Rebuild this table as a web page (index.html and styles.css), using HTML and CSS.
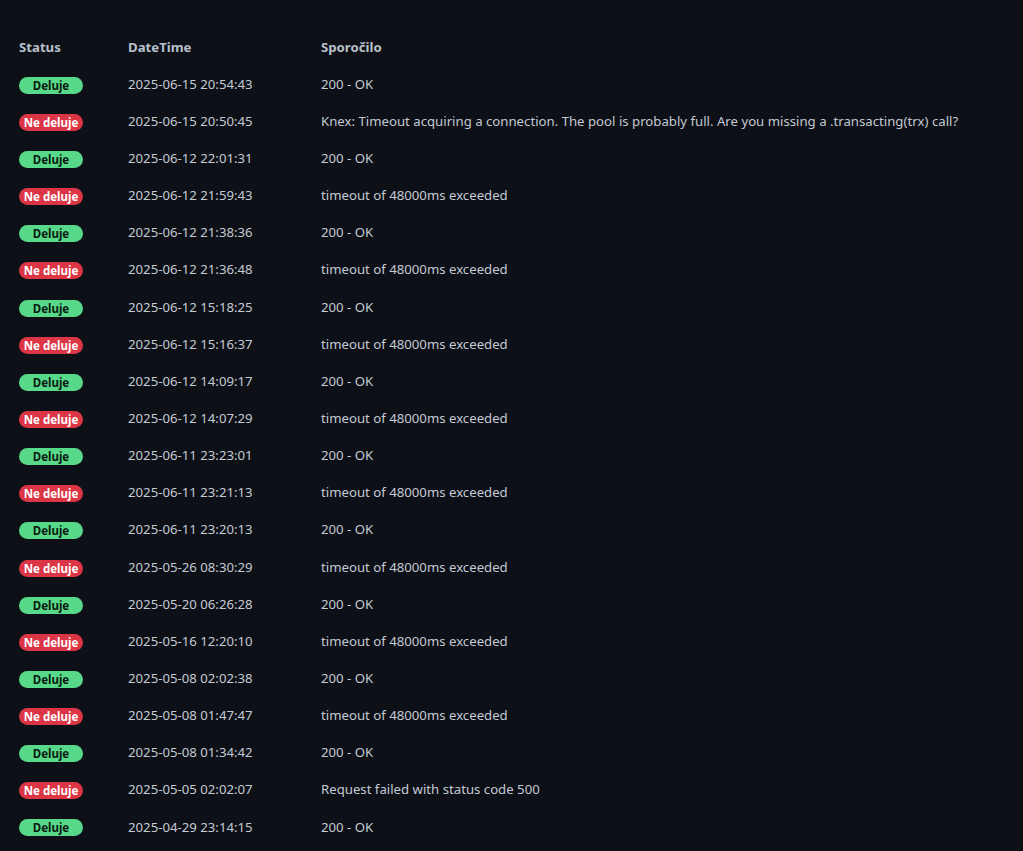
FILE: index.html
```html
<!DOCTYPE html>
<html lang="sl">
<head>
<meta charset="utf-8">
<title>Status</title>
<link rel="stylesheet" href="styles.css">
</head>
<body>
<main class="page">
<table class="log">
<thead>
<tr><th class="c-status">Status</th><th class="c-time">DateTime</th><th class="c-msg">Sporočilo</th></tr>
</thead>
<tbody>
<tr><td><span class="badge ok">Deluje</span></td><td>2025-06-15 20:54:43</td><td>200 - OK</td></tr>
<tr><td><span class="badge err">Ne deluje</span></td><td>2025-06-15 20:50:45</td><td>Knex: Timeout acquiring a connection. The pool is probably full. Are you missing a .transacting(trx) call?</td></tr>
<tr><td><span class="badge ok">Deluje</span></td><td>2025-06-12 22:01:31</td><td>200 - OK</td></tr>
<tr><td><span class="badge err">Ne deluje</span></td><td>2025-06-12 21:59:43</td><td>timeout of 48000ms exceeded</td></tr>
<tr><td><span class="badge ok">Deluje</span></td><td>2025-06-12 21:38:36</td><td>200 - OK</td></tr>
<tr><td><span class="badge err">Ne deluje</span></td><td>2025-06-12 21:36:48</td><td>timeout of 48000ms exceeded</td></tr>
<tr><td><span class="badge ok">Deluje</span></td><td>2025-06-12 15:18:25</td><td>200 - OK</td></tr>
<tr><td><span class="badge err">Ne deluje</span></td><td>2025-06-12 15:16:37</td><td>timeout of 48000ms exceeded</td></tr>
<tr><td><span class="badge ok">Deluje</span></td><td>2025-06-12 14:09:17</td><td>200 - OK</td></tr>
<tr><td><span class="badge err">Ne deluje</span></td><td>2025-06-12 14:07:29</td><td>timeout of 48000ms exceeded</td></tr>
<tr><td><span class="badge ok">Deluje</span></td><td>2025-06-11 23:23:01</td><td>200 - OK</td></tr>
<tr><td><span class="badge err">Ne deluje</span></td><td>2025-06-11 23:21:13</td><td>timeout of 48000ms exceeded</td></tr>
<tr><td><span class="badge ok">Deluje</span></td><td>2025-06-11 23:20:13</td><td>200 - OK</td></tr>
<tr><td><span class="badge err">Ne deluje</span></td><td>2025-05-26 08:30:29</td><td>timeout of 48000ms exceeded</td></tr>
<tr><td><span class="badge ok">Deluje</span></td><td>2025-05-20 06:26:28</td><td>200 - OK</td></tr>
<tr><td><span class="badge err">Ne deluje</span></td><td>2025-05-16 12:20:10</td><td>timeout of 48000ms exceeded</td></tr>
<tr><td><span class="badge ok">Deluje</span></td><td>2025-05-08 02:02:38</td><td>200 - OK</td></tr>
<tr><td><span class="badge err">Ne deluje</span></td><td>2025-05-08 01:47:47</td><td>timeout of 48000ms exceeded</td></tr>
<tr><td><span class="badge ok">Deluje</span></td><td>2025-05-08 01:34:42</td><td>200 - OK</td></tr>
<tr><td><span class="badge err">Ne deluje</span></td><td>2025-05-05 02:02:07</td><td>Request failed with status code 500</td></tr>
<tr><td><span class="badge ok">Deluje</span></td><td>2025-04-29 23:14:15</td><td>200 - OK</td></tr>
</tbody>
</table>
</main>
</body>
</html>
```

FILE: styles.css
```css
html, body {
  margin: 0;
  padding: 0;
  background: #0d1017;
  height: 100%;
}
body {
  font-family: "Noto Sans", "Open Sans", sans-serif;
  font-size: 13.2px;
  color: #c3cad3;
}
.page {
  padding: 28px 19px 0 19px;
}
.log {
  border-collapse: collapse;
  border-spacing: 0;
}
.log th, .log td {
  padding: 0;
  height: 37.15px;
  text-align: left;
  vertical-align: middle;
  white-space: nowrap;
  line-height: 20px;
}
.log th {
  font-weight: 700;
  font-size: 13.2px;
  color: #b8c0cb;
}
.c-status { width: 109px; }
.c-time { width: 193px; }
.badge {
  display: inline-block;
  width: 64px;
  height: 17px;
  line-height: 17px;
  border-radius: 9px;
  text-align: center;
  font-size: 11.5px;
  font-weight: 700;
  vertical-align: middle;
}
.badge.ok {
  background: #58d98a;
  color: #0b1a10;
}
.badge.err {
  background: #dc3545;
  color: #ffffff;
}
```
